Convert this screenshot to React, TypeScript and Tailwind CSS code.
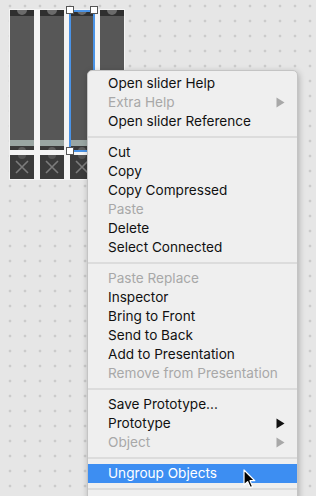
import React from 'react';

type Item = { label?: string; disabled?: boolean; submenu?: boolean; active?: boolean; separator?: boolean };

const items: Item[] = [
    { label: 'Open slider Help' },
    { label: 'Extra Help', disabled: true, submenu: true },
    { label: 'Open slider Reference' },
    { separator: true },
    { label: 'Cut' },
    { label: 'Copy' },
    { label: 'Copy Compressed' },
    { label: 'Paste', disabled: true },
    { label: 'Delete' },
    { label: 'Select Connected' },
    { separator: true },
    { label: 'Paste Replace', disabled: true },
    { label: 'Inspector' },
    { label: 'Bring to Front' },
    { label: 'Send to Back' },
    { label: 'Add to Presentation' },
    { label: 'Remove from Presentation', disabled: true },
    { separator: true },
    { label: 'Save Prototype...' },
    { label: 'Prototype', submenu: true },
    { label: 'Object', disabled: true, submenu: true },
    { separator: true },
    { label: 'Ungroup Objects', active: true },
    { separator: true },
];

const Arrow: React.FC<{ color: string }> = ({ color }) => (
    <svg width="9" height="11" viewBox="0 0 9 11">
        <path d="M0.5 0.5 L8.5 5.5 L0.5 10.5 Z" fill={color} />
    </svg>
);

const Cursor: React.FC = () => (
    <svg width="14" height="21" viewBox="0 0 14 21" className="absolute left-[243px] top-[469px]">
        <path
            d="M1 1 L1 16 L4.6 12.6 L7.2 18.6 L9.6 17.6 L7 11.7 L11.8 11.7 Z"
            fill="#000"
            stroke="#fff"
            strokeWidth="1.2"
            strokeLinejoin="round"
        />
    </svg>
);

const SliderColumn: React.FC = () => (
    <div className="flex w-[24px] flex-col">
        <div className="flex h-[140px] flex-col">
            <div className="relative h-[6px] overflow-hidden bg-[#2f2f2f]">
                <div className="absolute left-[7px] top-[-5px] h-[10px] w-[10px] rounded-full bg-[#6b6b6b]" />
            </div>
            <div className="h-[124px] bg-[#575757]" />
            <div className="h-[6px] bg-[#9aa6a3]" />
            <div className="relative h-[4px] overflow-hidden bg-[#3a3a3a]">
                <div className="absolute left-[8px] top-[1px] h-[8px] w-[8px] rounded-full bg-[#5e5e5e]" />
            </div>
        </div>
        <div className="h-[5px]" />
        <div className="relative flex h-[24px] items-center justify-center overflow-hidden bg-[#3b3b3b]">
            <div className="absolute left-[8px] top-[-4px] h-[8px] w-[8px] rounded-full bg-[#555]" />
            <svg width="14" height="14" viewBox="0 0 14 14">
                <path d="M1 1 L13 13 M13 1 L1 13" stroke="#7c7c7c" strokeWidth="1.6" />
            </svg>
        </div>
    </div>
);

const Handle: React.FC<{ className: string }> = ({ className }) => (
    <div className={`absolute h-[8px] w-[8px] border border-[#555] bg-white ${className}`} />
);

export default function App() {
    return (
        <div
            className="relative h-[496px] w-[316px] overflow-hidden bg-[#e6e6e6] bg-[radial-gradient(circle,#a9a9a9_0.7px,transparent_1.2px)] bg-[length:15px_15px] bg-[position:2.5px_-1.5px]"
            style={{ fontFamily: 'Inter, "Liberation Sans", sans-serif' }}
        >
            {/* slider object on the canvas */}
            <div className="absolute left-[9px] top-[9px] flex gap-[6px] bg-[#f4f4f4] p-[1px]">
                <SliderColumn />
                <SliderColumn />
                <SliderColumn />
                <SliderColumn />
            </div>
            <div className="absolute left-[69px] top-[10px] h-[142px] w-[26px] border-2 border-[#4a93e6]" />
            <Handle className="left-[66px] top-[6px]" />
            <Handle className="left-[90px] top-[6px]" />
            <Handle className="left-[66px] top-[147px]" />

            {/* context menu */}
            <div className="absolute left-[87px] top-[70px] h-[440px] w-[211px] rounded-[5px] border border-[#c4c4c4] bg-[#efefef] pt-[3px] shadow-[1px_2px_6px_rgba(0,0,0,0.25)]">
                {items.map((it, i) =>
                    it.separator ? (
                        <div key={i} className="flex h-[12px] items-center">
                            <div className="h-[2px] w-full bg-[#dcdcdc]" />
                        </div>
                    ) : (
                        <div
                            key={i}
                            className={`flex h-[19px] items-center justify-between pl-[20px] pr-[12px] text-[13.6px] leading-none ${
                                it.active ? 'bg-[#3d8ef2] text-white' : it.disabled ? 'text-[#a8a8a8]' : 'text-[#111]'
                            }`}
                        >
                            <span>{it.label}</span>
                            {it.submenu && <Arrow color={it.disabled ? '#a8a8a8' : '#111'} />}
                        </div>
                    )
                )}
            </div>
            <Cursor />
        </div>
    );
}
